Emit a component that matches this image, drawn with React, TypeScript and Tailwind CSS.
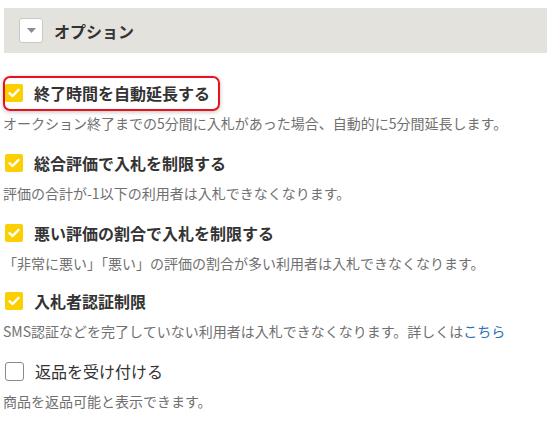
import React from 'react';

interface OptionItem {
    label: string;
    checked: boolean;
    description: React.ReactNode;
    highlight?: boolean;
    gapTop?: string;
}

const CheckMark: React.FC<{ checked: boolean }> = ({ checked }) => {
    if (!checked) {
        return <span className="block w-[19px] h-[19px] shrink-0 rounded-[3px] border border-[#8a8a8a] bg-white" />;
    }
    return (
        <span className="flex w-[18px] h-[18px] shrink-0 items-center justify-center rounded-[2px] bg-[#fbcf00]">
            <svg width="12" height="10" viewBox="0 0 12 10" fill="none">
                <path d="M1.5 5.2 L4.6 8 L10.5 1.8" stroke="#ffffff" strokeWidth="2.4" strokeLinecap="round" strokeLinejoin="round" />
            </svg>
        </span>
    );
};

const options: OptionItem[] = [
    {
        label: '終了時間を自動延長する',
        checked: true,
        highlight: true,
        description: 'オークション終了までの5分間に入札があった場合、自動的に5分間延長します。',
    },
    {
        label: '総合評価で入札を制限する',
        checked: true,
        description: '評価の合計が-1以下の利用者は入札できなくなります。',
    },
    {
        label: '悪い評価の割合で入札を制限する',
        checked: true,
        description: '「非常に悪い」「悪い」の評価の割合が多い利用者は入札できなくなります。',
    },
    {
        label: '入札者認証制限',
        checked: true,
        gapTop: 'mt-[18px]',
        description: (
            <>
                SMS認証などを完了していない利用者は入札できなくなります。詳しくは
                <span className="text-[#2a72b5]">こちら</span>
            </>
        ),
    },
    {
        label: '返品を受け付ける',
        checked: false,
        description: '商品を返品可能と表示できます。',
    },
];

const App: React.FC = () => {
    return (
        <div
            className="w-[547px] h-[426px] bg-white overflow-hidden"
            style={{ fontFamily: '"Noto Sans CJK JP", "Noto Sans", sans-serif' }}
        >
            {/* セクション見出し */}
            <div className="mt-[8px] ml-[4px] h-[45px] bg-[#e3e2dc] flex items-center pl-[15px]">
                <span className="flex w-[24px] h-[25px] items-center justify-center rounded-[3px] border border-[#c9c9c6] bg-white">
                    <svg width="9" height="5" viewBox="0 0 9 5">
                        <path d="M0 0 L9 0 L4.5 5 Z" fill="#8a8a8a" />
                    </svg>
                </span>
                <span className="ml-[11px] text-[16px] font-bold text-[#333333]">オプション</span>
            </div>

            <div className="mt-[30px] flex flex-col">
                {options.map((opt, i) => (
                    <div key={i} className={i === 0 ? '' : opt.gapTop ?? 'mt-[20px]'}>
                        <div className="relative flex h-[20px] items-center pl-[5px]">
                            {opt.highlight && (
                                <div className="absolute left-[3px] top-[-7px] w-[217px] h-[35px] rounded-[7px] border-2 border-[#e8121c] shadow-[0_1px_4px_rgba(0,0,0,0.25)]" />
                            )}
                            <CheckMark checked={opt.checked} />
                            <span
                                className={
                                    'ml-[11px] text-[16px] leading-[20px] text-[#333333] ' +
                                    (opt.checked ? 'font-bold' : 'font-normal')
                                }
                            >
                                {opt.label}
                            </span>
                        </div>
                        <p className="mt-[10px] pl-[3px] text-[14px] leading-[20px] text-[#707070] whitespace-nowrap">
                            {opt.description}
                        </p>
                    </div>
                ))}
            </div>
        </div>
    );
};

export default App;
